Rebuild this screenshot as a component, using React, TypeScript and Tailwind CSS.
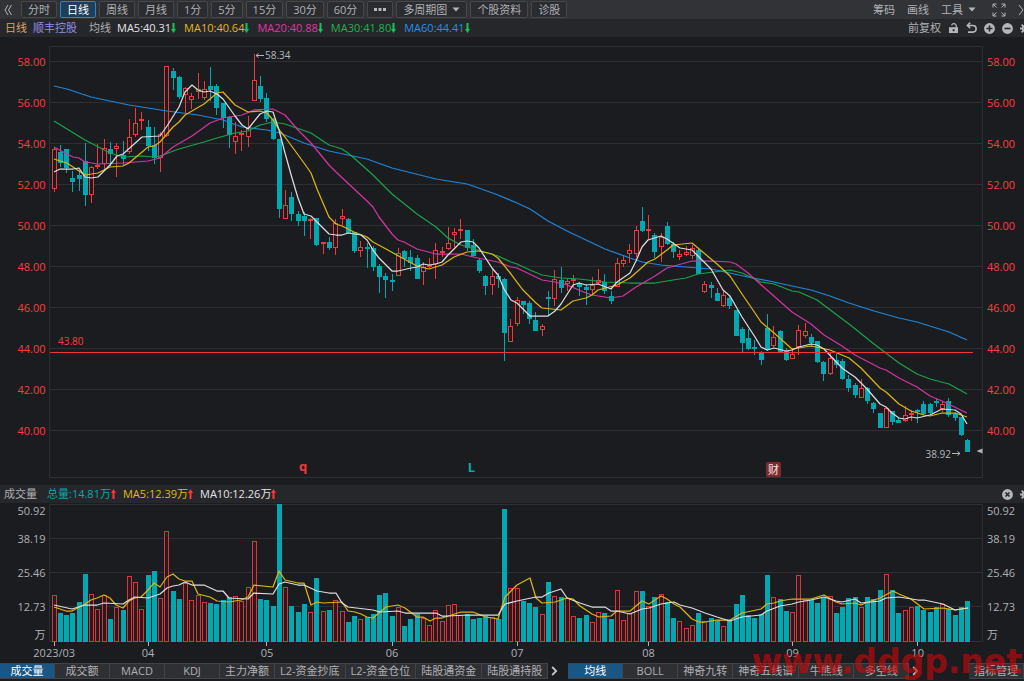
import type { ReactNode } from 'react';

export default function App() {
  return (
    <div
      className="relative overflow-hidden bg-[#1b1c20] text-[11px] leading-4 text-[#afb1b4]"
      style={{ fontFamily: '"Open Sans", "Noto Sans CJK SC", sans-serif' }}
    >
      <Toolbar />
      <PriceHeader />
      <PriceChart />
      <VolumeHeader />
      <VolumeChart />
      <IndicatorTabs />

      <div
        aria-hidden
        className="pointer-events-none absolute right-0.5 bottom-px text-[33px] leading-9 font-bold whitespace-nowrap text-[#c80808]/65"
        style={{ fontFamily: '"DejaVu Sans", sans-serif' }}
      >
        www.ddgp.net
      </div>
    </div>
  );
}

const UP = '#ee3a3a';
const DOWN = '#00a9b1';
const BG = '#1b1c20';
const GRID = '#2e2f33';

const periods = ['分时', '日线', '周线', '月线', '1分', '5分', '15分', '30分', '60分'];

function Toolbar() {
  return (
    <header className="flex h-[19px] items-center bg-[#323337] whitespace-nowrap">
      <button type="button" aria-label="收起" className="flex w-[21px] shrink-0 items-center pl-1">
        <svg width="9" height="12" viewBox="0 0 9 12" fill="none" stroke="#b4b6b9">
          <path d="M4 1 1 6l3 5M7.5 1l-3 5 3 5" />
        </svg>
      </button>
      <nav className="flex gap-[3px]">
        {periods.map((p) => (
          <ToolButton key={p} active={p === '日线'}>
            {p}
          </ToolButton>
        ))}
        <ToolButton label="更多周期">
          <svg width="12" height="3" viewBox="0 0 12 3" fill="#b4b6b9">
            <path d="M0 0h3v3H0zM4.5 0h3v3h-3zM9 0h3v3H9z" />
          </svg>
        </ToolButton>
        <ToolButton>
          多周期图
          <Caret />
        </ToolButton>
        <ToolButton>个股资料</ToolButton>
        <ToolButton>诊股</ToolButton>
      </nav>
      <div className="-mr-[6px] ml-auto flex shrink-0 items-center gap-3">
        <button type="button">筹码</button>
        <button type="button">画线</button>
        <button type="button" className="flex items-center gap-1">
          工具
          <Caret />
        </button>
        <button type="button" aria-label="全屏" className="ml-1">
          <svg width="14" height="14" viewBox="0 0 14 14" fill="none" stroke="#b4b6b9">
            <path d="M1 4.5V1h3.5M1 1l3.5 3.5M9.5 1H13v3.5M13 1 9.5 4.5M1 9.5V13h3.5M1 13l3.5-3.5M13 9.5V13H9.5M13 13 9.5 9.5" />
          </svg>
        </button>
        <button type="button" aria-label="关闭">
          <svg width="12" height="12" viewBox="0 0 12 12" fill="none" stroke="#b4b6b9">
            <path d="m1 1 4 5-4 5M6 1l4 5-4 5" />
          </svg>
        </button>
      </div>
    </header>
  );
}

function ToolButton({
  children,
  active,
  label,
}: {
  children: ReactNode;
  active?: boolean;
  label?: string;
}) {
  return (
    <button
      type="button"
      aria-label={label}
      className={`flex h-[17px] items-center gap-1 rounded-xs border px-[6px] ${
        active
          ? 'border-[#2487c8] bg-[#1d3f5a] text-white'
          : 'border-[#46474b] bg-[#2b2c30] hover:text-white'
      }`}
    >
      {children}
    </button>
  );
}

function Caret() {
  return (
    <svg width="8" height="5" viewBox="0 0 8 5" fill="#b4b6b9" className="ml-px">
      <path d="M0.5 0.5h7L4 4.5z" />
    </svg>
  );
}

function Arrow({ up }: { up?: boolean }) {
  return (
    <svg
      width="5"
      height="10"
      viewBox="0 0 5 10"
      fill={up ? '#ff3535' : '#12c65a'}
      className="shrink-0"
    >
      {up ? <path d="M2.5 0 5 4H3.5v6h-2V4H0z" /> : <path d="M2.5 10 5 6H3.5V0h-2v6H0z" />}
    </svg>
  );
}

function PriceHeader() {
  return (
    <div className="flex h-[18px] items-center bg-[#26272b] pl-[5px] whitespace-nowrap">
      <span className="text-[#d8a468]">日线</span>
      <span className="ml-[6px] text-[#8f8fe8]">顺丰控股</span>
      <span className="ml-3">均线</span>
      <div className="ml-[6px] flex gap-2">
        <span className="flex items-center text-[#e4e4e6]">
          MA5:40.31
          <Arrow />
        </span>
        <span className="flex items-center text-[#e2b90d]">
          MA10:40.64
          <Arrow />
        </span>
        <span className="flex items-center text-[#e035a6]">
          MA20:40.88
          <Arrow />
        </span>
        <span className="flex items-center text-[#1ab350]">
          MA30:41.80
          <Arrow />
        </span>
        <span className="flex items-center text-[#1f90ec]">
          MA60:44.41
          <Arrow />
        </span>
      </div>
      <div className="-mr-[7px] ml-auto flex shrink-0 items-center gap-[7px]">
        <button type="button">前复权</button>
        <button type="button" aria-label="锁定">
          <svg width="11" height="12" viewBox="0 0 11 12">
            <path d="M3.6 3.4a2.4 2.4 0 0 1 4.7.6v1.8" fill="none" stroke="#b4b6b9" strokeWidth="1.3" />
            <path d="M1 5.2h9V11H1z" fill="#b4b6b9" />
            <path d="M4.7 7.2h1.8v2H4.7z" fill="#26272b" />
          </svg>
        </button>
        <button type="button" aria-label="撤销">
          <svg width="11" height="12" viewBox="0 0 11 12" fill="none" stroke="#b4b6b9" strokeWidth="1.6">
            <path d="M1.5 3.5h5.3a3.2 3.2 0 0 1 0 6.6H2" />
            <path d="M4.2.6 1.4 3.5l2.8 2.7" />
          </svg>
        </button>
        <button type="button" aria-label="放大">
          <svg width="11" height="11" viewBox="0 0 11 11">
            <circle cx="5.5" cy="5.5" r="5.4" fill="#b4b6b9" />
            <path d="M5.5 2.5v6M2.5 5.5h6" stroke="#26272b" strokeWidth="1.6" />
          </svg>
        </button>
        <button type="button" aria-label="缩小">
          <svg width="11" height="11" viewBox="0 0 11 11">
            <circle cx="5.5" cy="5.5" r="5.4" fill="#b4b6b9" />
            <path d="M2.5 5.5h6" stroke="#26272b" strokeWidth="1.6" />
          </svg>
        </button>
        <GearButton />
      </div>
    </div>
  );
}

function GearButton() {
  return (
    <button type="button" aria-label="设置">
      <svg width="11" height="11" viewBox="0 0 12 12">
        <circle cx="6" cy="6" r="3" fill="none" stroke="#b4b6b9" strokeWidth="2.2" />
        <path
          d="M6 0v2.4M6 9.6V12M0 6h2.4M9.6 6H12M1.8 1.8l1.6 1.6M8.6 8.6l1.6 1.6M1.8 10.2l1.6-1.6M8.6 3.4l1.6-1.6"
          stroke="#b4b6b9"
          strokeWidth="2"
        />
      </svg>
    </button>
  );
}

// x of the nth trading day
const dayX = (i: number) => 54.2 + i * 6.257;
const barX = (i: number) => Math.round(dayX(i) - 2.5);

const priceTicks = [58, 56, 54, 52, 50, 48, 46, 44, 42, 40];
const priceY = (p: number) => Math.round(60.5 + (58 - p) * 20.53);

function PriceChart() {
  return (
    <svg viewBox="0 37 1024 448" className="block h-auto w-full" role="img" aria-label="日线">
      <path d="M49.5 46.5h933v431h-933z" fill="none" stroke={GRID} />
      {priceTicks.map((p) => (
        <g key={p} fill="#fb3e3e">
          <path d={`M50 ${priceY(p)}.5H983`} stroke={GRID} />
          <text x="45.5" y={priceY(p) + 5} textAnchor="end">
            {p.toFixed(2)}
          </text>
          <text x="987" y={priceY(p) + 5}>
            {p.toFixed(2)}
          </text>
        </g>
      ))}

      {days.map(([up, high, top, bottom, low], i) => {
        const x = barX(i);
        const h = Math.max(bottom - top, 2);
        return (
          <g key={i}>
            <rect x={x + 2} y={high} width="1" height={low - high} fill={up ? UP : DOWN} />
            {up ? (
              <rect x={x + 0.5} y={top + 0.5} width="4" height={h - 1} fill={BG} stroke={UP} />
            ) : (
              <rect x={x} y={top} width="5" height={h} fill={DOWN} />
            )}
          </g>
        );
      })}

      <g fill="none" strokeWidth="1.25" strokeLinejoin="round">
        <polyline points={ma60} stroke="#1f86da" />
        <polyline points={ma30} stroke="#18a34a" />
        <polyline points={ma20} stroke="#d1359f" />
        <polyline points={ma10} stroke="#dcb40f" />
        <polyline points={ma5} stroke="#dcdcde" />
      </g>

      <path d="M50 352.5H973" stroke="#ee3434" />
      <text x="58" y="345" fill="#fb3e3e" fontSize="10">
        43.80
      </text>

      <g fill="#b4b6b9" fontSize="10">
        <path d="M256 55.5h8M258.5 53.5l-2.5 2 2.5 2" fill="none" stroke="#b4b6b9" />
        <text x="265" y="59">58.34</text>
        <path d="M952 453.5h8M957.5 451.5l2.5 2-2.5 2" fill="none" stroke="#b4b6b9" />
        <text x="951" y="458" textAnchor="end">
          38.92
        </text>
        <path d="M976.5 451l6-2.5v5z" />
      </g>

      <g fontSize="13" fontWeight="bold" textAnchor="middle">
        <text x="303" y="471" fill="#ee3a3a">
          q
        </text>
        <text x="471.5" y="472" fill={DOWN}>
          L
        </text>
      </g>
      <rect x="766" y="462" width="15" height="15" rx="2" fill="#7c2b2e" />
      <text x="773.5" y="474" textAnchor="middle" fill="#f4e4e4">
        财
      </text>
    </svg>
  );
}

function VolumeHeader() {
  return (
    <div className="flex h-[18px] items-center bg-[#26272b] pl-1 whitespace-nowrap">
      <span>成交量</span>
      <div className="ml-[10px] flex gap-[7px]">
        <span className="flex items-center text-[#0aa5ad]">
          总量:14.81万
          <Arrow up />
        </span>
        <span className="flex items-center text-[#e2b90d]">
          MA5:12.39万
          <Arrow up />
        </span>
        <span className="flex items-center text-[#e4e4e6]">
          MA10:12.26万
          <Arrow up />
        </span>
      </div>
      <div className="-mr-[7px] ml-auto flex shrink-0 items-center gap-[7px]">
        <button type="button" aria-label="关闭成交量">
          <svg width="11" height="11" viewBox="0 0 11 11">
            <circle cx="5.5" cy="5.5" r="5.4" fill="#b4b6b9" />
            <path d="m3.5 3.5 4 4m0-4-4 4" stroke="#26272b" strokeWidth="1.6" />
          </svg>
        </button>
        <GearButton />
      </div>
    </div>
  );
}

const volumeLabels: [string, number][] = [
  ['50.92', 515],
  ['38.19', 543],
  ['25.46', 577],
  ['12.73', 611],
  ['万', 639],
];

const months: [string, number][] = [
  ['2023/03', 0],
  ['04', 15],
  ['05', 34],
  ['06', 54],
  ['07', 74],
  ['08', 95],
  ['09', 118],
  ['10', 138],
];

function VolumeChart() {
  return (
    <svg viewBox="0 503 1024 159" className="block h-auto w-full" role="img" aria-label="成交量">
      <path d="M49.5 504.5h933v137h-933zM50 538.5h933M50 572.5h933M50 606.5h933" fill="none" stroke={GRID} />
      {volumeLabels.map(([label, y]) => (
        <g key={label} fill="#afb1b4">
          <text x="45.5" y={y} textAnchor="end">
            {label}
          </text>
          <text x="987" y={y}>
            {label}
          </text>
        </g>
      ))}

      {days.map(([up, , , , , top], i) =>
        up ? (
          <rect
            key={i}
            x={barX(i) + 0.5}
            y={top + 0.5}
            width="4"
            height={641 - top}
            fill="#2a1a1e"
            stroke="#d83638"
          />
        ) : (
          <rect key={i} x={barX(i)} y={top} width="5" height={642 - top} fill={DOWN} />
        ),
      )}

      <g fill="none" strokeWidth="1.25" strokeLinejoin="round">
        <polyline points={volMa5} stroke="#dcb40f" />
        <polyline points={volMa10} stroke="#dcdcde" />
      </g>

      {months.map(([label, i]) => (
        <g key={label} fill="#afb1b4">
          <rect x={barX(i) + 2} y="642" width="1" height="4" />
          <text x={dayX(i)} y="657" textAnchor="middle">
            {label}
          </text>
        </g>
      ))}
    </svg>
  );
}

const subTabs = ['成交量', '成交额', 'MACD', 'KDJ', '主力净额', 'L2-资金抄底', 'L2-资金仓位', '陆股通资金', '陆股通持股'];
const mainTabs = ['均线', 'BOLL', '神奇九转', '神奇五线谱', '牛熊线', '多空线'];

function IndicatorTabs() {
  return (
    <footer className="flex items-center pt-px pb-[2px] whitespace-nowrap">
      {subTabs.map((t) => (
        <Tab key={t} active={t === '成交量'}>
          {t}
        </Tab>
      ))}
      <MoreButton />
      {mainTabs.map((t) => (
        <Tab key={t} active={t === '均线'}>
          {t}
        </Tab>
      ))}
      <MoreButton />
      <div className="ml-auto flex">
        <Tab>指标管理</Tab>
      </div>
    </footer>
  );
}

function Tab({ children, active }: { children: ReactNode; active?: boolean }) {
  return (
    <button
      type="button"
      className={`flex h-4 min-w-[55px] shrink-0 items-center justify-center border-y border-r border-[#424347] px-[5px] ${
        active ? 'bg-[#1a5684] text-white' : 'bg-[#2f3034] hover:text-white'
      }`}
    >
      {children}
    </button>
  );
}

function MoreButton() {
  return (
    <button type="button" aria-label="更多" className="flex w-5 shrink-0 pl-[3px]">
      <svg width="7" height="10" viewBox="0 0 7 10" fill="none" stroke="#c4c6c9" strokeWidth="1.8">
        <path d="m1.2 1 4 4-4 4" />
      </svg>
    </button>
  );
}

// [up, high, body top, body bottom, low, volume top], in chart units
const days: number[][] = [
  [1, 147, 149, 189, 192, 595], [0, 145, 152, 163, 167, 613], [0, 149, 149, 168, 173, 615],
  [0, 171, 178, 182, 192, 613], [0, 170, 175, 179, 191, 602], [0, 143, 161, 195, 206, 574],
  [1, 166, 167, 195, 203, 594], [1, 144, 165, 167, 169, 609], [1, 139, 148, 164, 171, 595],
  [0, 142, 149, 154, 166, 619], [1, 143, 146, 149, 177, 607], [0, 141, 155, 159, 165, 610],
  [1, 119, 137, 152, 154, 576], [1, 108, 123, 135, 137, 582], [1, 112, 119, 121, 130, 609],
  [0, 120, 127, 146, 151, 575], [0, 127, 145, 158, 164, 571], [1, 132, 134, 158, 172, 598],
  [1, 66, 66, 136, 137, 531], [0, 68, 71, 78, 90, 591], [0, 76, 77, 97, 99, 599],
  [1, 87, 88, 95, 113, 583], [1, 93, 96, 100, 109, 600], [1, 73, 89, 92, 99, 595],
  [1, 81, 89, 98, 100, 602], [0, 67, 86, 90, 101, 603], [0, 84, 86, 108, 115, 604],
  [0, 103, 103, 118, 128, 600], [0, 116, 117, 135, 148, 597], [1, 122, 136, 142, 154, 596],
  [1, 130, 133, 135, 151, 601], [1, 116, 127, 137, 147, 587], [1, 54, 80, 101, 101, 541],
  [0, 76, 86, 99, 102, 599], [0, 93, 98, 119, 122, 600], [0, 118, 119, 139, 140, 606],
  [0, 139, 139, 209, 218, 504], [1, 190, 205, 219, 219, 587], [0, 192, 197, 214, 221, 606],
  [0, 211, 214, 221, 226, 612], [0, 212, 216, 221, 236, 604], [1, 218, 219, 221, 239, 612],
  [0, 218, 218, 245, 246, 578], [1, 242, 242, 244, 254, 611], [0, 237, 242, 248, 250, 610],
  [1, 219, 223, 248, 255, 600], [1, 209, 216, 219, 225, 611], [0, 218, 219, 233, 234, 622],
  [0, 232, 232, 251, 253, 616], [1, 241, 247, 251, 257, 619], [0, 243, 247, 249, 268, 617],
  [0, 246, 248, 267, 271, 614], [0, 264, 266, 277, 293, 595], [0, 273, 276, 280, 298, 593],
  [0, 274, 280, 282, 291, 616], [1, 248, 253, 276, 276, 607], [0, 250, 251, 259, 267, 626],
  [0, 250, 257, 263, 271, 619], [0, 255, 258, 279, 279, 614], [1, 262, 267, 272, 285, 618],
  [1, 258, 265, 266, 268, 625], [1, 243, 250, 264, 279, 610], [1, 247, 251, 253, 257, 621],
  [1, 227, 243, 249, 250, 605], [1, 228, 232, 235, 247, 604], [1, 219, 229, 231, 239, 615],
  [0, 230, 230, 248, 251, 614], [0, 239, 245, 256, 257, 619], [0, 258, 260, 271, 273, 618],
  [0, 275, 276, 286, 295, 616], [1, 270, 276, 285, 295, 617], [0, 273, 276, 279, 288, 619],
  [0, 278, 279, 333, 361, 509], [1, 319, 326, 342, 342, 588], [1, 297, 300, 324, 326, 588],
  [0, 301, 301, 305, 314, 601], [0, 301, 303, 319, 324, 603], [0, 312, 320, 331, 331, 607],
  [1, 324, 326, 330, 336, 614], [0, 291, 297, 299, 316, 582], [1, 270, 279, 299, 306, 596],
  [0, 267, 280, 288, 293, 597], [1, 279, 281, 284, 291, 598], [1, 275, 279, 281, 287, 616],
  [0, 282, 283, 287, 296, 618], [0, 284, 287, 290, 305, 615], [1, 277, 285, 290, 295, 622],
  [1, 269, 280, 283, 284, 612], [0, 274, 282, 291, 294, 613], [0, 291, 296, 301, 304, 619],
  [1, 258, 263, 287, 287, 590], [1, 255, 260, 264, 267, 620], [1, 244, 250, 254, 263, 613],
  [1, 226, 230, 254, 257, 591], [0, 207, 221, 231, 232, 591], [1, 215, 229, 231, 240, 606],
  [0, 233, 235, 252, 258, 597], [1, 233, 237, 247, 262, 594], [0, 222, 226, 244, 245, 602],
  [0, 242, 244, 252, 258, 618], [1, 250, 254, 257, 260, 621], [1, 246, 252, 255, 256, 628],
  [1, 245, 248, 256, 259, 625], [0, 248, 250, 274, 274, 613], [1, 281, 284, 292, 293, 621],
  [0, 282, 285, 288, 298, 618], [0, 288, 293, 301, 301, 620], [1, 291, 295, 306, 307, 626],
  [0, 295, 298, 306, 309, 620], [0, 310, 310, 336, 336, 604], [0, 327, 329, 343, 352, 595],
  [0, 329, 338, 349, 350, 615], [0, 340, 347, 349, 355, 618], [0, 351, 352, 360, 365, 614],
  [0, 314, 328, 350, 351, 575], [1, 326, 337, 346, 347, 597], [0, 330, 331, 352, 352, 599],
  [0, 348, 351, 360, 361, 611], [1, 348, 354, 359, 359, 612], [1, 325, 330, 347, 355, 575],
  [1, 323, 331, 336, 338, 600], [0, 334, 337, 343, 347, 600], [0, 341, 341, 362, 363, 603],
  [0, 361, 362, 374, 381, 598], [1, 352, 358, 374, 375, 596], [0, 354, 360, 365, 368, 613],
  [0, 359, 361, 379, 380, 607], [0, 375, 379, 388, 392, 598], [0, 383, 385, 395, 398, 597],
  [1, 379, 388, 398, 398, 607], [0, 387, 388, 401, 404, 597], [0, 402, 403, 409, 413, 599],
  [0, 413, 413, 428, 428, 590], [1, 407, 408, 428, 428, 574], [0, 411, 411, 422, 425, 590],
  [0, 417, 420, 423, 423, 613], [1, 406, 415, 421, 422, 610], [1, 410, 413, 415, 421, 607],
  [0, 409, 410, 412, 423, 606], [0, 401, 404, 414, 415, 610], [0, 403, 404, 413, 414, 612],
  [0, 398, 401, 403, 407, 607], [1, 401, 404, 409, 412, 604], [0, 398, 401, 415, 417, 609],
  [0, 412, 414, 418, 421, 615], [0, 417, 417, 435, 436, 607], [0, 439, 440, 452, 452, 601],
];

const ma5 =
  '54,172 60,169 73,169 79,168 85,177 91,178 98,177 110,165 117,156 123,154 142,137 160,136 167,126 179,107 185,92 192,85 198,90 204,92 210,91 217,94 223,99 235,116 242,125 248,129 260,114 267,111 273,112 279,130 285,153 292,178 298,198 304,214 311,216 317,222 329,234 336,235 342,235 348,233 361,235 367,240 373,250 379,258 392,271 398,271 411,268 417,267 423,264 429,265 436,264 442,262 448,255 461,242 467,241 473,242 479,248 492,268 498,275 504,289 511,300 517,303 523,309 530,316 548,316 555,311 561,304 573,285 579,283 586,285 598,284 611,289 617,282 630,273 636,261 642,247 648,240 661,236 667,239 680,248 692,250 698,256 711,269 723,290 730,296 742,317 755,337 761,347 767,350 774,348 786,351 792,350 799,347 811,344 817,345 824,349 842,368 849,373 855,377 867,389 880,404 886,407 892,413 899,418 905,419 911,417 917,418 930,415 942,409 955,410 961,414 967,424';
const ma10 =
  '54,159 60,161 67,163 79,171 85,175 98,173 110,167 123,166 129,163 148,147 154,146 160,142 173,127 179,122 185,115 204,104 217,93 223,92 235,105 248,112 260,111 267,113 273,120 280,131 285,137 304,163 311,173 317,189 329,217 336,224 342,226 354,232 367,237 373,242 386,249 404,259 417,266 429,269 442,265 454,257 467,252 479,251 492,254 498,258 511,274 523,290 536,303 542,308 561,310 573,301 586,298 592,295 598,290 617,285 630,278 648,262 655,259 667,250 673,245 692,243 698,248 717,264 730,276 742,294 755,313 761,322 774,333 792,349 811,346 830,350 849,358 861,368 880,388 886,392 899,404 911,411 924,415 930,416 942,413 955,413 967,417';
const ma20 =
  '54,147 67,154 73,157 79,158 85,162 98,164 123,163 148,161 160,158 173,147 192,136 210,123 223,118 242,115 254,110 273,109 285,115 298,130 311,143 329,165 336,172 367,201 373,207 379,217 392,234 398,240 404,242 417,249 436,254 461,254 473,257 498,262 511,267 517,268 542,280 555,282 567,285 586,293 592,295 611,298 623,296 636,287 655,276 667,268 692,261 711,261 730,262 736,264 748,273 767,290 792,312 811,324 824,335 842,346 855,355 880,368 886,370 899,378 917,387 930,396 942,401 967,413';
const ma30 =
  '54,121 85,140 110,153 123,157 142,156 154,157 160,156 179,149 204,142 217,138 235,133 248,131 260,125 273,122 285,124 311,133 329,145 342,149 348,153 354,158 373,175 392,194 417,214 436,227 448,238 461,245 498,256 511,262 517,264 530,270 542,275 561,278 579,279 605,282 630,283 655,283 673,280 686,278 698,274 730,270 742,273 761,282 774,284 792,291 799,292 817,300 849,324 874,344 899,363 917,374 930,379 949,384 967,394';
const ma60 =
  '54,86 67,89 91,97 129,105 148,108 167,111 198,115 223,120 242,127 267,130 280,133 304,143 329,151 367,159 392,168 436,179 467,184 473,186 498,195 517,203 530,209 548,221 567,231 586,240 605,249 630,258 642,262 661,265 698,268 711,269 748,277 774,282 792,286 811,290 830,296 849,303 874,311 899,318 917,322 949,332 967,340';

const volMa5 =
  '54,607 66,611 72,611 85,604 91,600 97,598 104,595 110,598 116,605 123,608 129,601 135,598 141,597 148,590 154,583 160,587 167,577 173,574 179,579 185,581 192,581 198,594 210,597 217,601 229,602 241,600 248,597 254,585 273,587 279,571 285,580 298,583 304,583 311,605 317,602 323,603 342,602 348,611 355,612 361,614 367,617 373,618 386,607 398,605 405,608 417,617 423,617 430,621 436,618 442,618 461,612 473,612 486,617 498,619 505,597 517,585 530,578 536,598 542,603 555,602 567,598 573,599 580,606 592,614 599,617 611,616 617,611 630,611 642,601 649,604 661,596 667,599 674,604 680,607 692,619 699,622 705,622 717,620 730,620 742,613 761,609 767,604 774,603 780,601 792,599 811,599 824,595 836,602 842,604 855,603 861,605 868,602 880,598 893,591 899,594 911,599 924,609 943,608 955,610 968,608';
const volMa10 =
  '54,605 72,609 85,605 97,605 104,603 123,604 129,600 135,597 148,598 160,594 167,588 173,586 179,585 185,582 192,585 204,585 217,591 223,591 229,598 248,599 254,593 273,594 279,584 285,582 298,585 304,585 317,591 329,593 336,593 342,603 348,607 373,610 380,612 398,611 405,613 436,613 442,616 448,616 467,615 498,615 505,604 517,601 536,597 542,597 549,593 561,589 567,598 580,603 592,607 605,607 611,611 617,611 630,614 642,609 649,608 661,604 674,602 680,605 692,608 705,613 717,617 730,621 742,617 761,615 767,611 780,606 792,604 799,602 811,600 824,597 836,601 842,602 855,599 861,603 880,601 886,598 899,597 918,600 924,600 943,604 955,610 968,608';
